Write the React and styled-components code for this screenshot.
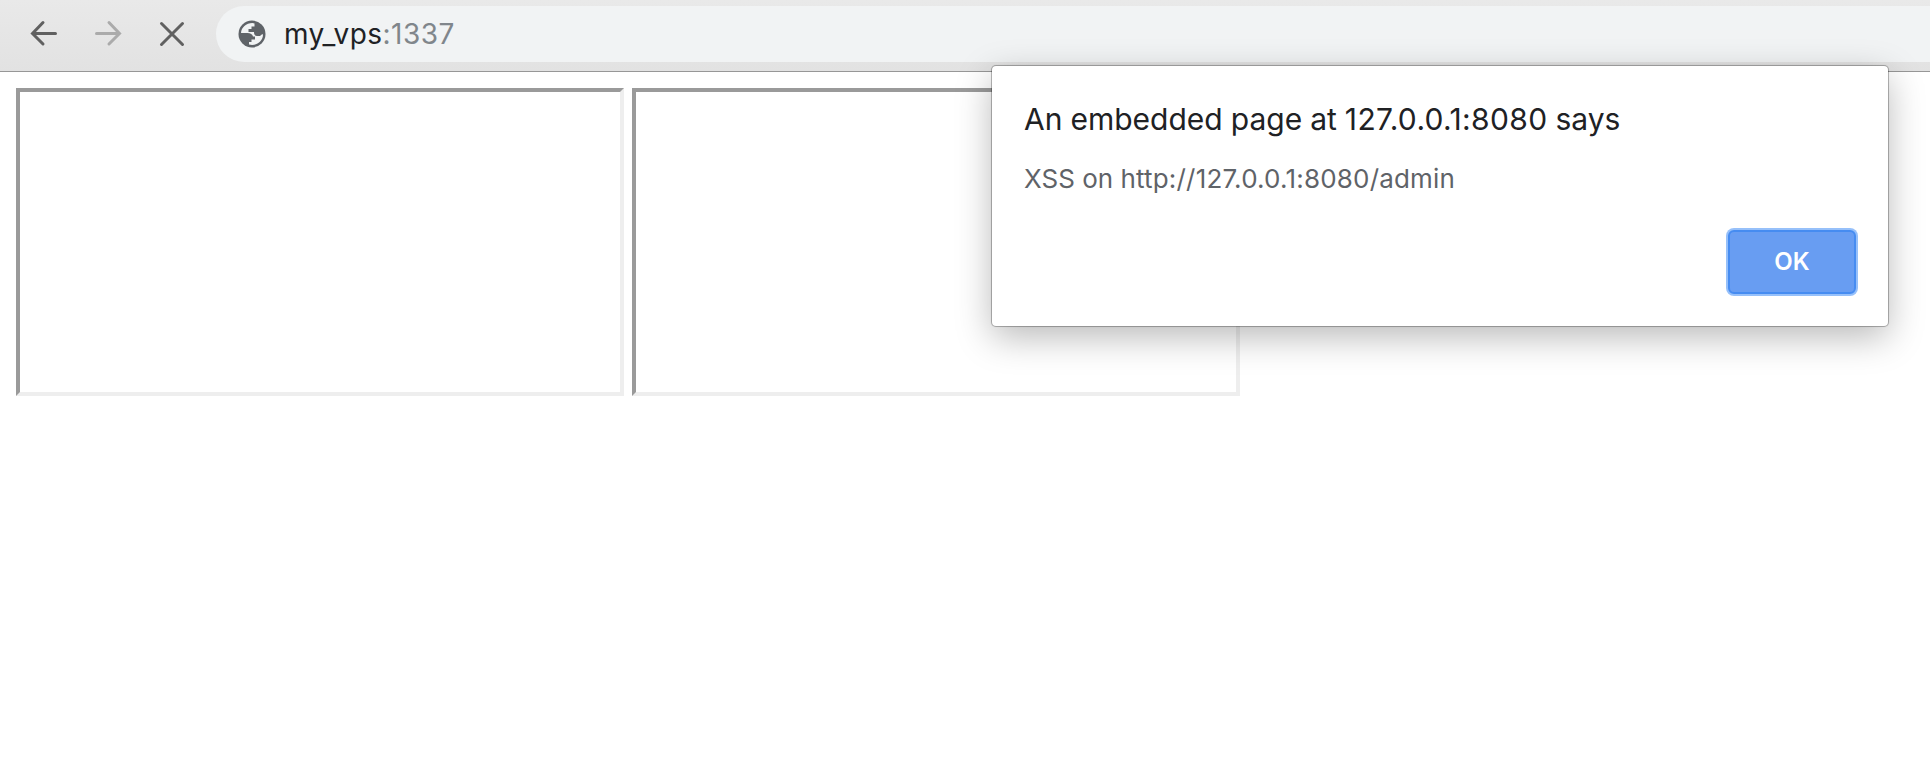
import React from "react";
import styled, { createGlobalStyle } from "styled-components";

const GlobalStyle = createGlobalStyle`
  body {
    margin: 0;
    background: #fff;
    overflow: hidden;
    font-family: Inter, "Liberation Sans", sans-serif;
    -webkit-font-smoothing: antialiased;
  }
`;

const Window = styled.div`
  position: relative;
  height: 760px;
  overflow: hidden;
`;

const Toolbar = styled.header`
  box-sizing: border-box;
  display: flex;
  align-items: flex-start;
  height: 72px;
  padding: 6px 0 0 28px;
  background: linear-gradient(#e9e9e9, #e2e2e2);
  border-bottom: 1px solid #979797;
`;

const NavButtons = styled.nav`
  display: flex;
  gap: 32px;
  width: 188px;
  height: 56px;
  align-items: center;
`;

const NavIcon = styled.svg`
  width: 32px;
  height: 32px;
  flex: none;
  fill: none;
  stroke: ${(p) => (p.$disabled ? "#ababab" : "#606060")};
  stroke-width: 3;
  stroke-linecap: round;
`;

const AddressBar = styled.div`
  flex: 1;
  display: flex;
  align-items: center;
  height: 56px;
  padding-left: 22px;
  box-sizing: border-box;
  border-radius: 28px 0 0 28px;
  background: #f1f3f4;
`;

const GlobeIcon = styled.svg`
  width: 28px;
  height: 28px;
  flex: none;
`;

const Address = styled.span`
  margin-left: 18px;
  font-size: 28px;
  line-height: 56px;
  letter-spacing: 0.45px;
  color: #202124;
`;

const Port = styled.span`
  color: #80868b;
`;

const Page = styled.main`
  display: flex;
  gap: 8px;
  padding: 16px;
`;

const Frame = styled.div`
  box-sizing: border-box;
  flex: none;
  width: 608px;
  height: 308px;
  border: 4px solid;
  border-color: #9a9a9a #eee #eee #9a9a9a;
`;

const Dialog = styled.section`
  position: absolute;
  left: 992px;
  top: 66px;
  box-sizing: border-box;
  width: 896px;
  height: 260px;
  padding: 31px 32px 32px;
  display: flex;
  flex-direction: column;
  background: #fff;
  border-radius: 4px;
  box-shadow: 0 0 0 1px rgba(0, 0, 0, 0.22), 0 0 2px rgba(0, 0, 0, 0.25),
    0 11px 36px rgba(0, 0, 0, 0.28);
`;

const Title = styled.h1`
  margin: 0;
  font-size: 30px;
  font-weight: 400;
  line-height: 44px;
  word-spacing: -0.4px;
  white-space: nowrap;
  color: #202124;
`;

const Message = styled.p`
  margin: 18px 0 0;
  font-size: 26px;
  line-height: 40px;
  white-space: nowrap;
  color: #5f6368;
`;

const Origin = styled.span`
  letter-spacing: ${(p) => p.$tracking};
`;

const OkButton = styled.button`
  box-sizing: border-box;
  align-self: flex-end;
  width: 128px;
  height: 64px;
  margin-top: 31px;
  padding: 0 0 2px;
  border: 2px solid #468cf1;
  border-radius: 6px;
  box-shadow: 0 0 0 2px #96c0fa;
  background: #689df2;
  color: #fff;
  font-family: inherit;
  font-size: 24px;
  font-weight: 600;
`;

export default function App() {
  return (
    <Window>
      <GlobalStyle />
      <Toolbar>
        <NavButtons>
          <NavIcon viewBox="0 0 32 32">
            <path d="M27.5 15.5H5M15 4.5L4.5 15.5L15 26" />
          </NavIcon>
          <NavIcon viewBox="0 0 32 32" $disabled>
            <path d="M4.5 15.5H27M17 4.5L27.5 15.5L17 26" />
          </NavIcon>
          <NavIcon viewBox="0 0 32 32">
            <path d="M5.5 5.5L26.5 26.5M26.5 5.5L5.5 26.5" />
          </NavIcon>
        </NavButtons>
        <AddressBar>
          <GlobeIcon viewBox="0 0 28 28">
            <circle cx="14" cy="14" r="13.5" fill="#5f6368" />
            <path
              fill="#f1f3f4"
              d="M14.5 3C8 3 3.4 7.5 3 13H9.5C12.5 13 14.5 14.5 15 16.5H17V19.5H13.5V22H11V24.5C18 26.5 25 21.5 25 14.5C24 13.5 23 15 22 16H19C17 16 16 14.5 16 12H10.5V9H13.5V6.5H16.5V3.5Z"
            />
          </GlobeIcon>
          <Address>
            my_vps<Port>:1337</Port>
          </Address>
        </AddressBar>
      </Toolbar>
      <Page>
        <Frame />
        <Frame />
      </Page>
      <Dialog>
        <Title>
          An embedded page at <Origin $tracking="0.35px">127.0.0.1:8080</Origin> says
        </Title>
        <Message>
          XSS on <Origin $tracking="0.19px">http://127.0.0.1:8080/admin</Origin>
        </Message>
        <OkButton>OK</OkButton>
      </Dialog>
    </Window>
  );
}
